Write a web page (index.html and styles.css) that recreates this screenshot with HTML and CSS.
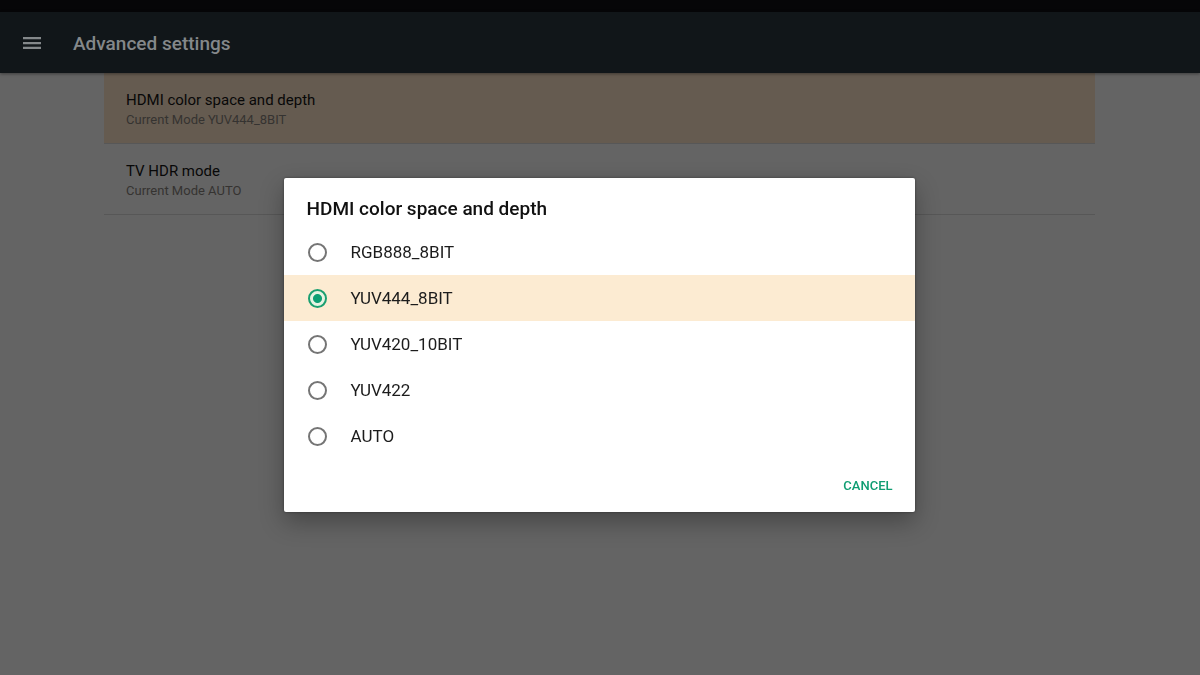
FILE: index.html
```
<!DOCTYPE html>
<html lang="en">
<head>
    <meta charset="UTF-8">
    <meta name="viewport" content="width=device-width, initial-scale=1.0">
    <title>Advanced settings</title>
    <link rel="stylesheet" href="styles.css">
</head>
<body>
    <div class="status-bar"></div>
    <header class="toolbar">
        <button class="menu-button" type="button" aria-label="Menu">
            <svg width="18" height="12" viewBox="0 0 18 12" fill="currentColor">
                <path d="M0 0h18v2.3H0zM0 4.9h18v2.3H0zM0 9.7h18V12H0z"/>
            </svg>
        </button>
        <h1>Advanced settings</h1>
    </header>

    <main class="settings">
        <button class="setting selected" type="button">
            <span class="setting-title">HDMI color space and depth</span>
            <span class="setting-summary">Current Mode YUV444_8BIT</span>
        </button>
        <button class="setting" type="button">
            <span class="setting-title">TV HDR mode</span>
            <span class="setting-summary">Current Mode AUTO</span>
        </button>
    </main>

    <div class="overlay">
        <form class="dialog" role="dialog" aria-modal="true" aria-labelledby="dialog-title">
            <h2 id="dialog-title">HDMI color space and depth</h2>
            <label class="option">
                <input type="radio" name="mode" value="RGB888_8BIT">
                <span>RGB888_8BIT</span>
            </label>
            <label class="option">
                <input type="radio" name="mode" value="YUV444_8BIT" checked>
                <span>YUV444_8BIT</span>
            </label>
            <label class="option">
                <input type="radio" name="mode" value="YUV420_10BIT">
                <span>YUV420_10BIT</span>
            </label>
            <label class="option">
                <input type="radio" name="mode" value="YUV422">
                <span>YUV422</span>
            </label>
            <label class="option">
                <input type="radio" name="mode" value="AUTO">
                <span>AUTO</span>
            </label>
            <div class="actions">
                <button class="cancel" type="button">CANCEL</button>
            </div>
        </form>
    </div>
</body>
</html>
```
FILE: styles.css
```
* {
    box-sizing: border-box;
}
body {
    margin: 0;
    min-height: 100vh;
    background-color: #646464;
    font-family: Roboto, "Liberation Sans", sans-serif;
}
button {
    border: none;
    background: none;
    font-family: inherit;
    cursor: pointer;
}
.status-bar {
    height: 12px;
    background-color: #060608;
}
.toolbar {
    position: relative;
    display: flex;
    align-items: center;
    gap: 32px;
    height: 61px;
    padding: 1px 23px 0;
    background-color: #111619;
    color: #84888a;
    box-shadow: 0 1px 3px rgba(0, 0, 0, 0.4);
}
.menu-button {
    display: flex;
    padding: 0;
    color: inherit;
}
.toolbar h1 {
    margin: 0;
    font-size: 19px;
    font-weight: 500;
}
.settings {
    margin: 0 105px 0 104px;
}
.setting {
    display: block;
    width: 100%;
    padding: 17px 22px 14px;
    border-bottom: 1px solid #575757;
    text-align: left;
}
.setting.selected {
    background-color: #655b50;
}
.setting-title,
.setting-summary {
    display: block;
}
.setting-title {
    font-size: 15px;
    line-height: 20px;
    color: #080808;
}
.setting-summary {
    font-size: 13px;
    line-height: 19px;
    color: #353331;
}
.overlay {
    position: fixed;
    inset: 0;
    display: flex;
    align-items: center;
    justify-content: center;
    padding: 15px 2px 0 0;
}
.dialog {
    width: 53%;
    min-width: 320px;
    max-width: 631px;
    padding: 18px 0 10px;
    border-radius: 2px;
    background-color: #fff;
    box-shadow: 0 10px 24px rgba(0, 0, 0, 0.3), 0 0 3px rgba(0, 0, 0, 0.4);
}
.dialog h2 {
    margin: 0 23px 7px;
    font-size: 19px;
    line-height: 26px;
    font-weight: 500;
    color: #111;
}
.option {
    display: flex;
    align-items: center;
    gap: 24px;
    height: 46px;
    padding: 0 24px;
    font-size: 17px;
    color: #1c1c1c;
    cursor: pointer;
}
.option:has(input:checked) {
    background-color: #fcebd2;
}
.option input {
    appearance: none;
    flex: none;
    width: 19px;
    height: 19px;
    margin: 0;
    border: 2px solid #757575;
    border-radius: 50%;
    cursor: pointer;
}
.option input:checked {
    border-color: #1a9f70;
    background: radial-gradient(circle, #0d9f74 4px, #e6f3e2 5px);
}
.actions {
    display: flex;
    justify-content: flex-end;
    padding: 9px 14px 0;
}
.cancel {
    height: 34px;
    padding: 0 8px;
    font-size: 13px;
    font-weight: 500;
    color: #0f9d72;
}
```
